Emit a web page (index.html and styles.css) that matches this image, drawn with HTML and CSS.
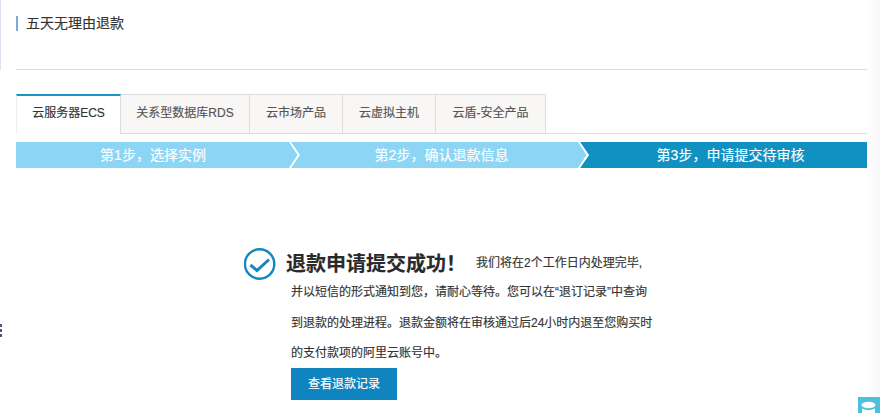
FILE: index.html
```html
<!DOCTYPE html>
<html lang="zh-CN">
<head>
<meta charset="utf-8">
<title>五天无理由退款</title>
<link rel="stylesheet" href="styles.css">
</head>
<body>
<div class="edge-strip"></div>
<div class="edge-dots"><i></i><i></i><i></i></div>
<main class="page">
  <h1 class="title">五天无理由退款</h1>
  <div class="tabs">
    <div class="tab tab-active">云服务器ECS</div>
    <div class="tab">关系型数据库RDS</div>
    <div class="tab">云市场产品</div>
    <div class="tab">云虚拟主机</div>
    <div class="tab">云盾-安全产品</div>
  </div>
  <div class="steps">
    <div class="step step-one">第1步，选择实例</div>
    <div class="step step-two">第2步，确认退款信息</div>
    <div class="step step-three">第3步，申请提交待审核</div>
    <svg class="chevron chevron-a" viewBox="0 0 11 26"><path d="M0 0H2L11 13L2 26H0L8.500 13Z" fill="#fff"/></svg>
    <svg class="chevron chevron-b" viewBox="0 0 11 26"><path d="M0 0H2L11 13L2 26H0L8.500 13Z" fill="#fff"/></svg>
  </div>
  <section class="result">
    <div class="result-head">
      <svg class="check" viewBox="0 0 32 32"><circle cx="15.600" cy="16" r="14.700" fill="none" stroke="#1287c0" stroke-width="2.400"/><path d="M6.500 17L13 22.500L25 11.500" fill="none" stroke="#1287c0" stroke-width="3"/></svg>
      <h2 class="result-title">退款申请提交成功！</h2>
      <span class="result-lead">我们将在2个工作日内处理完毕,</span>
    </div>
    <div class="result-body">
      <p class="line">并以短信的形式通知到您，请耐心等待。您可以在“退订记录”中查询</p>
      <p class="line">到退款的处理进程。退款金额将在审核通过后24小时内退至您购买时</p>
      <p class="line">的支付款项的阿里云账号中。</p>
      <a class="button">查看退款记录</a>
    </div>
  </section>
</main>
<div class="widget">
  <svg viewBox="0 0 22 16"><rect width="22" height="16" fill="#4cc0dc"/><ellipse cx="10.500" cy="8" rx="7" ry="3.200" fill="#fff"/><path d="M4 11.500Q10.500 15 17 11.500V16H4Z" fill="#fff"/></svg>
</div>
</body>
</html>
```
FILE: styles.css
```css
* { box-sizing: border-box; }
html, body { margin: 0; height: 100%; }
body {
  position: relative;
  height: 413px;
  overflow: hidden;
  background: linear-gradient(to right, #fff 867px, #f7f7f7 880px);
  font-family: "Liberation Sans", "Noto Sans CJK SC", sans-serif;
  color: #333;
  -webkit-text-stroke: 0.15px currentColor;
}
.page { width: 867px; height: 413px; padding: 16px 0 0 16px; background: #fff; }
.title {
  position: relative;
  height: 54px;
  margin: 0;
  padding-left: 10px;
  border-bottom: 1px solid #dcdcdc;
  font-size: 14px;
  font-weight: 400;
  line-height: 15px;
}
.title::before {
  content: "";
  position: absolute;
  left: 0;
  top: 0;
  width: 2px;
  height: 15px;
  background: #7fa9d6;
}
.tabs {
  display: grid;
  grid-template-columns: 105px 129px 93px 93px 110px;
  height: 40px;
  margin-top: 24px;
  border-bottom: 1px solid #ddd;
}
.tab {
  height: 40px;
  border: 1px solid #ddd;
  border-left: 0;
  background: #f9f7f5;
  font-size: 12px;
  line-height: 37px;
  text-align: center;
  color: #555;
  white-space: nowrap;
}
.tab-active {
  border-left: 1px solid #eee;
  border-top: 2px solid #1a93c6;
  border-bottom: 0;
  background: #fff;
  color: #333;
  line-height: 35px;
}
.steps {
  position: relative;
  display: flex;
  height: 26px;
  margin-top: 8px;
  background: #8cd5f5;
  font-size: 14px;
  line-height: 26px;
  color: #fff;
  text-align: center;
}
.step { height: 26px; }
.step-one { width: 274px; }
.step-two { width: 290px; padding-left: 13px; }
.step-three {
  width: 287px;
  padding-left: 14px;
  background: #1091c2;
  clip-path: polygon(0 0, 100% 0, 100% 100%, 0 100%, 9px 50%);
}
.chevron { position: absolute; top: 0; width: 11px; height: 26px; }
.chevron-a { left: 273px; }
.chevron-b { left: 562px; }
.result { width: 430px; margin: 80px 0 0 228px; }
.result-head { display: flex; align-items: center; height: 32px; }
.check { flex: none; width: 32px; height: 32px; }
.result-title {
  margin: 0 0 0 10px;
  font-size: 20px;
  line-height: 32px;
  font-weight: 700;
  color: #2a2a2a;
  white-space: nowrap;
}
.result-lead { margin: 0 0 6px 10px; font-size: 12px; white-space: nowrap; }
.result-body { margin-top: -3px; padding-left: 47px; }
.line { margin: 0; font-size: 12px; line-height: 30.500px; white-space: nowrap; }
.button {
  display: block;
  width: 106px;
  height: 32px;
  margin-top: -1px;
  background: #1084bf;
  color: #fff;
  font-size: 12px;
  line-height: 32px;
  text-align: center;
}
.edge-strip { position: absolute; left: 0; top: 0; width: 1px; height: 70px; background: #dde4f0; }
.edge-dots { position: absolute; left: 0; top: 324px; display: flex; flex-direction: column; gap: 2px; }
.edge-dots i { display: block; width: 2px; height: 3px; background: #4a5a75; }
.widget { position: absolute; right: 0; bottom: 0; width: 22px; height: 16px; line-height: 0; }
.widget svg { width: 22px; height: 16px; }
```
